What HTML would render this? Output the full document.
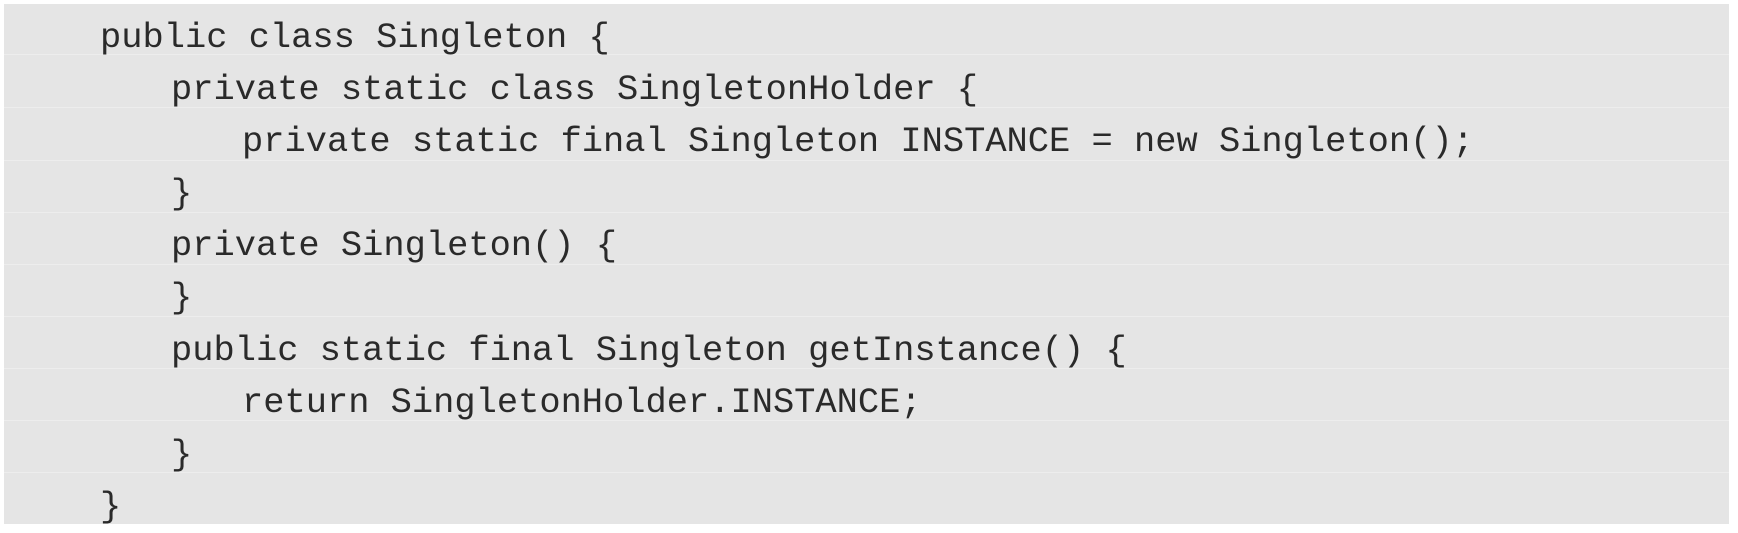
<!DOCTYPE html>
<html><head><style>
html,body{margin:0;padding:0;background:#fff;width:1738px;height:533px;overflow:hidden}
.box{position:absolute;left:4px;top:4px;width:1725px;height:520px;background:#e5e5e5}
.row{position:absolute;left:0;width:1725px;border-top:1px solid #ededed;box-sizing:border-box}
.t{position:absolute;font-family:"Liberation Mono",monospace;font-size:35.4px;color:#2a2a2a;white-space:pre;line-height:35px}
</style></head><body>
<div class="box">
<div class="row" style="top:50px"></div>
<div class="row" style="top:103px"></div>
<div class="row" style="top:156px"></div>
<div class="row" style="top:208px"></div>
<div class="row" style="top:260px"></div>
<div class="row" style="top:312px"></div>
<div class="row" style="top:364px"></div>
<div class="row" style="top:416px"></div>
<div class="row" style="top:468px"></div>
</div>
<div class="t" style="left:100px;top:21px">public class Singleton {</div>
<div class="t" style="left:171px;top:73px">private static class SingletonHolder {</div>
<div class="t" style="left:242px;top:125px">private static final Singleton INSTANCE = new Singleton();</div>
<div class="t" style="left:171px;top:177px">}</div>
<div class="t" style="left:171px;top:229px">private Singleton() {</div>
<div class="t" style="left:171px;top:281px">}</div>
<div class="t" style="left:171px;top:334px">public static final Singleton getInstance() {</div>
<div class="t" style="left:242px;top:386px">return SingletonHolder.INSTANCE;</div>
<div class="t" style="left:171px;top:438px">}</div>
<div class="t" style="left:100px;top:490px">}</div>
</body></html>
